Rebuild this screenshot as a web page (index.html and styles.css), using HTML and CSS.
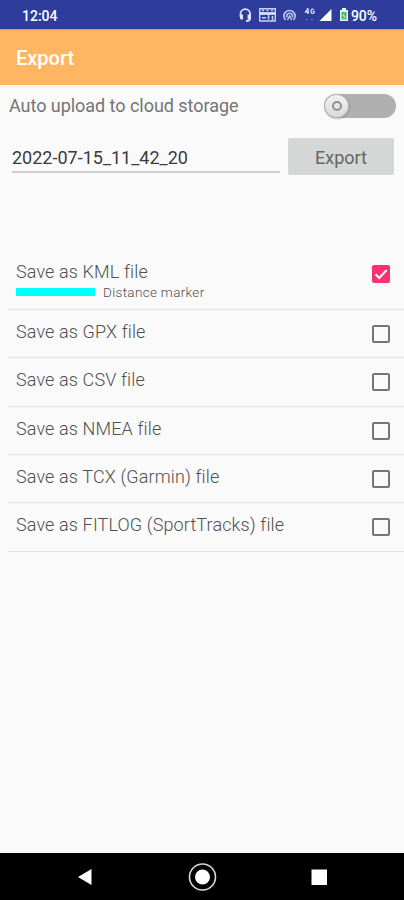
FILE: index.html
```html
<!DOCTYPE html>
<html lang="en">
<head>
<meta charset="utf-8">
<meta name="viewport" content="width=device-width, initial-scale=1">
<title>Export</title>
<link rel="stylesheet" href="styles.css">
</head>
<body>
<div class="screen">
  <div class="status">
    <span class="time">12:04</span>
    <svg class="status-icons" width="112" height="18" viewBox="238 6 112 18" fill="none">
      <path d="M240.500 17v-3a4.800 4.800 0 0 1 9.600 0v4.500q0 2.500-4 2.500" stroke="#dfe4ff" stroke-width="1.800"/>
      <path d="M240 14.500h3v5h-1.500q-1.500 0-1.500-1.500zM247.600 14.500h3v3.500q0 1.500-1.500 1.500h-1.500z" fill="#dfe4ff"/>
      <path d="M259.700 8.700h15.600v12.300h-15.600z" stroke="#c9d0f6" stroke-width="1.400"/>
      <path d="M260 13.500h15" stroke="#e4e8ff" stroke-width="2.600"/>
      <path d="M262 10.500h2M266.500 10.500h2M271 10.500h2" stroke="#c9d0f6" stroke-width="1.300"/>
      <path d="M262 17.800h4M268.500 15v4.500M272.500 16v4" stroke="#c9d0f6" stroke-width="1.600"/>
      <path d="M285.500 20a5.600 5.600 0 1 1 8 0M287 17.500a2.900 2.900 0 1 1 5.200 0" stroke="#c3caf2" stroke-width="1.600"/>
      <path d="M287.500 20l2.100-4 2.100 4" stroke="#c3caf2" stroke-width="1.400"/>
      <path d="M308 8l-2.500 4h3.500M308 8v6M314 9.500q-3-1.500-3 1.800 0 3 3 1.700v-1.600h-1.300" stroke="#d5dbfa" stroke-width="1.300"/>
      <path d="M306 19.500h2M311 19.500h2" stroke="#7280c8" stroke-width="1.200"/>
      <path d="M331.500 9v12h-12z" fill="#fff"/>
      <path d="M342 8h4v2h2v11h-8v-11h2z" fill="#e9f5f0"/>
      <path d="M341.500 12h5v7.500h-5z" fill="#37b85b"/>
      <path d="M344.500 12.500l-2 3.500h3l-2 3" stroke="#d9f4e0" stroke-width=".8"/>
    </svg>
    <span class="battery">90%</span>
  </div>
  <header class="bar"><h1>Export</h1></header>
  <main>
    <div class="upload">
      <span class="upload-label">Auto upload to cloud storage</span>
      <span class="switch"><span class="thumb"></span></span>
    </div>
    <div class="name-row">
      <div class="field"><span>2022-07-15_11_42_20</span></div>
      <button class="export"><span>Export</span></button>
    </div>
    <ul class="formats">
      <li class="kml">
        <div class="text">
          <span class="label">Save as KML file</span>
          <div class="marker"><i class="swatch"></i><span>Distance marker</span></div>
        </div>
        <span class="check on"><svg width="18" height="18" viewBox="0 0 18 18"><path d="M3.500 9.300l3.700 3.700 7.500-8" fill="none" stroke="#fff" stroke-width="2"/></svg></span>
      </li>
      <li><span class="label">Save as GPX file</span><span class="check"></span></li>
      <li><span class="label">Save as CSV file</span><span class="check"></span></li>
      <li><span class="label">Save as NMEA file</span><span class="check"></span></li>
      <li><span class="label">Save as TCX (Garmin) file</span><span class="check"></span></li>
      <li><span class="label">Save as FITLOG (SportTracks) file</span><span class="check"></span></li>
    </ul>
  </main>
  <nav class="nav">
    <svg width="404" height="47" viewBox="0 0 404 47">
      <path d="M78 24l13.500-8v16z" fill="#fff"/>
      <circle cx="202.500" cy="24" r="13" fill="none" stroke="#d8d8d8" stroke-width="1.600"/>
      <circle cx="202.500" cy="24" r="7.500" fill="#fff"/>
      <path d="M311.500 16.500h15.500v15.500h-15.500z" fill="#fff"/>
    </svg>
  </nav>
</div>
</body>
</html>
```
FILE: styles.css
```css
* { box-sizing: border-box; }
body { margin: 0; font-family: Roboto, sans-serif; background: #fafafa; color: #6c6c6c; }
.screen { width: 404px; height: 900px; display: flex; flex-direction: column; overflow: hidden; }
.status { height: 29px; background: #2e3d9c; color: #fff; display: flex; align-items: center; padding: 3px 0 0 22px; font-weight: 500; }
.time { font-size: 14px; width: 216px; }
.status-icons { flex: none; margin-top: -2px; }
.battery { font-size: 14px; margin-left: 1px; letter-spacing: -0.1px; }
.bar { height: 56px; background: #ffb562; border-top: 1px solid #cf9c79; display: flex; align-items: center; padding: 1px 16px 0; }
h1 { margin: 0; font-size: 20px; font-weight: 500; color: #fff; }
main { flex: 1; }
.upload { height: 41px; display: flex; align-items: center; justify-content: space-between; padding: 0 8px 0 9px; }
.upload-label { font-size: 18px; letter-spacing: -0.04px; color: #747474; }
.switch { width: 72px; height: 24px; border-radius: 12px; background: #b0b0b0; }
.thumb { display: flex; align-items: center; justify-content: center; width: 25px; height: 24px; border-radius: 50%; background: linear-gradient(#f2f2f2, #dadada); border: 1px solid #b0b0b0; box-shadow: 1px 1px 2px #8888; }
.thumb::before { content: ""; box-sizing: border-box; width: 10px; height: 10px; border: 2px solid #909090; border-radius: 50%; }
.name-row { display: flex; padding: 12px 10px 0 12px; gap: 8px; }
.field { width: 268px; height: 35px; border-bottom: 2px solid #cecece; color: #3b3b3b; font-size: 18px; line-height: 39px; white-space: nowrap; }
.export { width: 106px; height: 37px; border: 0; border-radius: 2px; background: #d5d7d6; color: #656565; font: 18px Roboto, sans-serif; padding: 1px 0 0; }
.formats { list-style: none; margin: 75px 0 0 8px; padding: 0; }
.formats li { height: 48.35px; border-bottom: 1.500px solid #e2e2e2; display: flex; justify-content: space-between; padding: 11px 14px 0 8px; }
.formats li.kml { height: 60px; }
.label { display: block; font-size: 18px; line-height: 21px; font-weight: 300; letter-spacing: 0.13px; color: #505050; }
.marker { display: flex; align-items: center; gap: 8px; font-size: 13.500px; line-height: 20px; font-weight: 300; letter-spacing: 0.32px; color: #505050; }
.swatch { width: 79px; height: 8px; background: #00ffff; }
.check { width: 18px; height: 18px; margin-top: 4px; border: 2px solid #767676; border-radius: 2px; }
.check.on { border: 0; background: #f93171; }
.check svg { display: block; }
.nav { height: 47px; background: #000; }
.nav svg { display: block; }
```
